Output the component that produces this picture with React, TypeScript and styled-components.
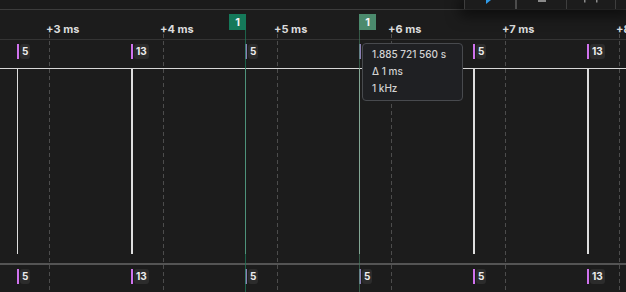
import React from 'react';
import styled, { createGlobalStyle } from 'styled-components';

const GlobalStyle = createGlobalStyle`
  html, body {
    margin: 0;
    padding: 0;
    background: #1c1c1c;
    overflow: hidden;
  }
  body {
    font-family: Inter, Roboto, "Liberation Sans", sans-serif;
  }
`;

// time axis: 114px per ms, +3 ms sits at x=49
const PX_PER_MS = 114;
const ORIGIN = 49 - 3 * PX_PER_MS;
const msToX = (ms: number) => ORIGIN + ms * PX_PER_MS;

const ticks = [3, 4, 5, 6, 7, 8];

type Edge = { x: number; label: string; wide?: boolean; dim?: boolean };
const edges: Edge[] = [
  { x: 17, label: '5' },
  { x: 131, label: '13', wide: true },
  { x: 245, label: '5', dim: true },
  { x: 359, label: '5', dim: true },
  { x: 473, label: '5', wide: true },
  { x: 587, label: '13', wide: true },
];

const Viewport = styled.div`
  position: relative;
  width: 626px;
  height: 292px;
  overflow: hidden;
  background: #1c1c1c;
  display: flex;
  flex-direction: column;
`;

const TopStrip = styled.div`
  position: relative;
  height: 9px;
  background: #1b1b1b;
  border-bottom: 1px solid #3c3c3c;
  flex-shrink: 0;
  z-index: 3;
`;

const Toolbar = styled.div`
  position: absolute;
  right: 0;
  top: 0;
  height: 9px;
  display: flex;
  background: #1c1c1c;
  box-shadow: 0 3px 14px 4px rgba(0, 0, 0, 0.55);
`;

const ToolSlot = styled.div<{ $w: number; $heavy?: boolean }>`
  position: relative;
  width: ${p => p.$w}px;
  height: 100%;
  border-left: ${p => (p.$heavy ? '2px solid #4c4c4c' : '1px solid #3e3e3e')};
  display: flex;
  justify-content: center;
`;

const Ruler = styled.div`
  position: relative;
  height: 29px;
  border-bottom: 1px solid #343434;
  flex-shrink: 0;
`;

const TickLabel = styled.span`
  position: absolute;
  top: 12px;
  line-height: 14px;
  font-size: 11px;
  font-weight: 700;
  color: #dcdcdc;
  white-space: nowrap;
`;

const LabelRow = styled.div`
  position: relative;
  height: 28px;
  flex-shrink: 0;
`;

const Marker = styled.div`
  position: absolute;
  top: 4px;
  display: flex;
  align-items: stretch;
  height: 15px;
`;

const MarkerBar = styled.div<{ $dim?: boolean }>`
  width: 2px;
  background: ${p => (p.$dim ? '#8c80b6' : '#cf72ee')};
`;

const MarkerTag = styled.span`
  margin-left: 1px;
  padding: 0 2px;
  border-radius: 3px;
  background: #2c2c2c;
  color: #ececec;
  font-size: 10px;
  font-weight: 700;
  line-height: 15px;
`;

const SignalArea = styled.div`
  position: relative;
  height: 194px;
  border-top: 1px solid #d8d8d8;
  flex-shrink: 0;
`;

const EdgeLine = styled.div<{ $wide?: boolean }>`
  position: absolute;
  top: 0;
  height: 185px;
  width: ${p => (p.$wide ? 2 : 1)}px;
  background: #dedede;
`;

const LaneDivider = styled.div`
  height: 2px;
  background: #545454;
  flex-shrink: 0;
`;

const GridLine = styled.div`
  position: absolute;
  top: 34px;
  bottom: 0;
  width: 1px;
  background: repeating-linear-gradient(
    to bottom,
    #4c4c4c 0 4px,
    transparent 4px 7px
  );
  z-index: 1;
  pointer-events: none;
`;

const CursorFlag = styled.div<{ $bg: string }>`
  position: absolute;
  top: 14px;
  width: 17px;
  height: 16px;
  background: ${p => p.$bg};
  color: #f4f4f4;
  font-size: 11px;
  font-weight: 700;
  line-height: 16px;
  text-align: center;
  z-index: 4;
`;

const CursorLine = styled.div<{ $color: string }>`
  position: absolute;
  top: 30px;
  bottom: 0;
  width: 1px;
  background: ${p => p.$color};
  z-index: 4;
`;

const Tooltip = styled.div`
  position: absolute;
  left: 362px;
  top: 43px;
  width: 81px;
  padding: 2px 9px 3px;
  background: #1f2023;
  border: 1px solid #484a4e;
  border-radius: 4px;
  color: #d2d2d2;
  font-size: 10px;
  font-weight: 500;
  line-height: 17px;
  white-space: nowrap;
  z-index: 5;
`;

function Markers() {
  return (
    <>
      {edges.map(e => (
        <Marker key={e.x} style={{ left: e.x }}>
          <MarkerBar $dim={e.dim} />
          <MarkerTag>{e.label}</MarkerTag>
        </Marker>
      ))}
    </>
  );
}

export default function App() {
  return (
    <>
      <GlobalStyle />
      <Viewport>
        <TopStrip>
          <Toolbar>
            <ToolSlot $w={50}>
              <svg width="8" height="5" viewBox="0 0 8 5" style={{ marginLeft: -4 }}>
                <path d="M2 0 L7 0 L2 4 Z" fill="#2f9be8" />
              </svg>
            </ToolSlot>
            <ToolSlot $w={49} $heavy>
              <svg width="10" height="4" viewBox="0 0 10 4" style={{ marginTop: 0 }}>
                <rect x="1" y="0" width="8" height="2" fill="#8a8a8a" />
              </svg>
            </ToolSlot>
            <ToolSlot $w={48}>
              <svg width="16" height="4" viewBox="0 0 16 4">
                <rect x="1" y="0" width="1.5" height="2.5" fill="#8a8a8a" />
                <rect x="13" y="0" width="1.5" height="2.5" fill="#8a8a8a" />
              </svg>
            </ToolSlot>
            <ToolSlot $w={10} />
          </Toolbar>
        </TopStrip>

        <Ruler>
          {ticks.map(t => (
            <TickLabel key={t} style={{ left: msToX(t) - 3 }}>
              +{t} ms
            </TickLabel>
          ))}
        </Ruler>

        <LabelRow>
          <Markers />
        </LabelRow>

        <SignalArea>
          {edges.map(e => (
            <EdgeLine key={e.x} $wide={e.wide} style={{ left: e.x }} />
          ))}
        </SignalArea>

        <LaneDivider />

        <LabelRow>
          <Markers />
        </LabelRow>

        {ticks.map(t => (
          <GridLine key={t} style={{ left: msToX(t) }} />
        ))}

        <CursorFlag $bg="#15795a" style={{ left: 229 }}>1</CursorFlag>
        <CursorLine $color="rgba(30, 120, 88, 0.75)" style={{ left: 245 }} />
        <CursorFlag $bg="#4b8a6d" style={{ left: 359 }}>1</CursorFlag>
        <CursorLine $color="rgba(70, 130, 100, 0.6)" style={{ left: 359 }} />

        <Tooltip>
          <div>1.885 721 560 s</div>
          <div>Δ 1 ms</div>
          <div>1 kHz</div>
        </Tooltip>
      </Viewport>
    </>
  );
}
